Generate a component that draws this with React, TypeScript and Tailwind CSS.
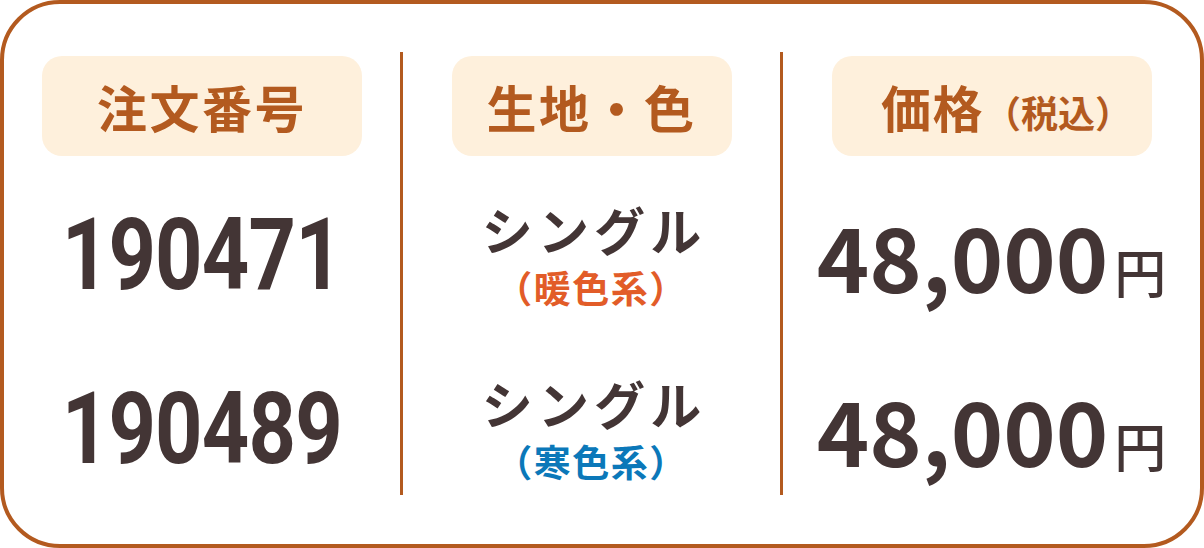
import React from "react";

const jp = "font-['Noto_Sans_CJK_JP','Noto_Sans',sans-serif]";

function Pill({ children, w }: { children: React.ReactNode; w: string }) {
  return (
    <div className={`${w} h-[100px] rounded-[20px] bg-[#fef0dc] flex items-center justify-center`}>
      {children}
    </div>
  );
}

function OrderNo({ value }: { value: string }) {
  // condensed look: Roboto bold squeezed horizontally
  return (
    <span className="inline-block scale-x-[0.82] font-['Roboto',sans-serif] font-bold text-[101px] leading-none tracking-[-0.01em] text-[#433535]">
      {value}
    </span>
  );
}

function Fabric({ tone, color }: { tone: string; color: string }) {
  return (
    <div className={`flex flex-col items-center ${jp} font-bold`}>
      <span className="text-[51px] leading-[1.2] tracking-[0.1em] text-[#433535] pl-[0.1em]">シングル</span>
      <span className={`mt-[5px] text-[37px] leading-[1.2] tracking-[0.04em] ${color}`}>（{tone}）</span>
    </div>
  );
}

function Price() {
  return (
    <div className={`flex items-baseline ${jp} leading-none text-[#433535]`}>
      <span className="text-[89px] font-bold">48,000</span>
      <span className="ml-[6px] text-[52px] font-medium">円</span>
    </div>
  );
}

export default function App() {
  return (
    <div className="w-[1204px] h-[548px] bg-white">
      <div className="w-full h-full border-4 border-[#b35a1f] rounded-[60px] pt-[48px] flex">
        {/* 注文番号 */}
        <div className="w-[396px] h-[443px] flex flex-col items-center pt-[4px]">
          <Pill w="w-[320px]">
            <span className={`${jp} font-bold text-[50px] tracking-[0.05em] text-[#b35a1f] leading-none`}>注文番号</span>
          </Pill>
          <div className="mt-[38px] h-[120px] flex items-center">
            <OrderNo value="190471" />
          </div>
          <div className="mt-[54px] h-[120px] flex items-center">
            <OrderNo value="190489" />
          </div>
        </div>
        <div className="w-[3px] h-[443px] bg-[#b35a1f]" />

        {/* 生地・色 */}
        <div className="w-[377px] h-[443px] flex flex-col items-center pt-[4px]">
          <Pill w="w-[280px]">
            <span className={`${jp} font-bold text-[50px] tracking-[0.05em] text-[#b35a1f] leading-none`}>生地・色</span>
          </Pill>
          <div className="mt-[38px] h-[120px] flex items-center">
            <Fabric tone="暖色系" color="text-[#e25c28]" />
          </div>
          <div className="mt-[54px] h-[120px] flex items-center">
            <Fabric tone="寒色系" color="text-[#0b78b9]" />
          </div>
        </div>
        <div className="w-[3px] h-[443px] bg-[#b35a1f]" />

        {/* 価格 */}
        <div className="flex-1 h-[443px] flex flex-col items-center pt-[4px]">
          <Pill w="w-[320px]">
            <span className={`${jp} font-bold text-[#b35a1f] leading-none flex items-baseline pl-[30px]`}>
              <span className="text-[50px] tracking-[0.03em]">価格</span>
              <span className="text-[37px]">（税込）</span>
            </span>
          </Pill>
          <div className="mt-[38px] h-[120px] flex items-center">
            <Price />
          </div>
          <div className="mt-[54px] h-[120px] flex items-center">
            <Price />
          </div>
        </div>
      </div>
    </div>
  );
}
